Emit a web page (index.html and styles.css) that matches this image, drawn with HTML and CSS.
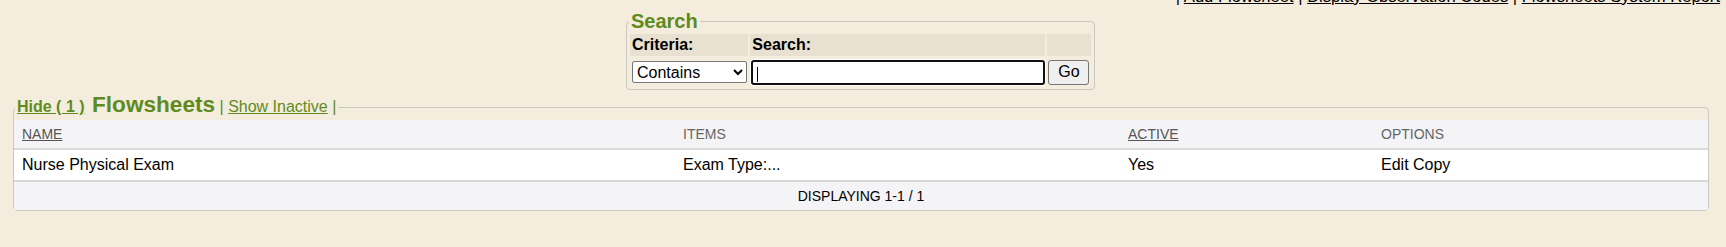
FILE: index.html
```html
<!DOCTYPE html>
<html lang="en">
<head>
    <meta charset="UTF-8">
    <title>Flowsheets</title>
    <link rel="stylesheet" href="styles.css">
</head>
<body>
    <div class="toplinks">
        | <a href="#">Add Flowsheet</a> | <a href="#">Display Observation Codes</a> | <a href="#">Flowsheets System Report</a>
    </div>

    <fieldset class="search">
        <legend>Search</legend>
        <table class="search-table">
            <tr>
                <th class="c1">Criteria:</th>
                <th class="c2">Search:</th>
                <th class="c3"></th>
            </tr>
            <tr>
                <td class="c1">
                    <select class="criteria">
                        <option>Contains</option>
                        <option>Starts With</option>
                        <option>Equals</option>
                    </select>
                </td>
                <td class="c2"><input type="text" class="query"></td>
                <td class="c3"><button class="go">Go</button></td>
            </tr>
        </table>
    </fieldset>

    <fieldset class="list">
        <legend>
            <a href="#" class="hide">Hide ( 1 )</a>
            <span class="title">Flowsheets</span>
            <span class="sep">|</span> <a href="#" class="inactive">Show Inactive</a> <span class="sep">|</span>
        </legend>
        <table class="grid">
            <thead>
                <tr>
                    <th class="col-name"><a href="#">NAME</a></th>
                    <th class="col-items">ITEMS</th>
                    <th class="col-active"><a href="#">ACTIVE</a></th>
                    <th class="col-options">OPTIONS</th>
                </tr>
            </thead>
            <tbody>
                <tr>
                    <td>Nurse Physical Exam</td>
                    <td>Exam Type:...</td>
                    <td>Yes</td>
                    <td>Edit Copy</td>
                </tr>
            </tbody>
            <tfoot>
                <tr>
                    <td colspan="4">DISPLAYING 1-1 / 1</td>
                </tr>
            </tfoot>
        </table>
    </fieldset>
</body>
</html>
```

FILE: styles.css
```css
body {
    margin: 0;
    padding: 0 5px 0 0;
    background-color: #f4ecdd;
    font-family: "Liberation Sans", Arial, sans-serif;
    color: #000;
}
.toplinks {
    margin-top: -12px;
    height: 18px;
    line-height: 18px;
    font-size: 16.6px;
    text-align: right;
    padding-right: 1px;
    white-space: nowrap;
}
.toplinks a {
    color: #000;
}

/* search box */
.search {
    width: 465px;
    margin: 4px auto 0;
    padding: 0 1px 1px;
    border: 1px solid #cbc8c0;
    border-radius: 4px;
}
.search legend {
    color: #5f8b1d;
    font-size: 20px;
    font-weight: bold;
    line-height: 22px;
    padding: 0 2px;
    margin-left: 1px;
}
.search-table {
    border-spacing: 2px;
    width: 100%;
}
.search-table th {
    background-color: #e8e1d1;
    text-align: left;
    font-size: 16px;
    height: 22px;
    padding: 0 2px;
}
.search-table td {
    height: 28px;
    padding: 0;
}
.search-table .c1 { width: 118px; }
.search-table .c3 { width: 44px; }
.search-table td.c1 { padding-left: 2px; }
.search-table td.c2 { padding-left: 1px; }
.search-table td.c3 { padding-left: 1px; }
.criteria {
    width: 115px;
    height: 22px;
    font-family: "Liberation Sans", Arial, sans-serif;
    font-size: 16px;
    border: 1px solid #767676;
    border-radius: 2px;
    background-color: #fff;
    color: #000;
}
.query {
    box-sizing: border-box;
    width: 294px;
    height: 25px;
    margin: 0;
    border: 2px solid #101010;
    border-radius: 3px;
    box-shadow: 0 0 0 1px #fff;
    outline: none;
    background: #fff linear-gradient(#000, #000) no-repeat 4px 5px / 1px 15px;
}
.go {
    box-sizing: border-box;
    width: 41px;
    height: 25px;
    font-family: "Liberation Sans", Arial, sans-serif;
    font-size: 16px;
    background-color: #efefef;
    border: 1px solid #767676;
    border-radius: 3px;
    padding: 0;
    color: #000;
}

/* flowsheet list */
.list {
    margin: 4px 12px 0 13px;
    padding: 0;
    border: 1px solid #cbc8c0;
    border-radius: 4px;
}
.list legend {
    padding: 0 2px;
    margin-left: 1px;
    line-height: 26px;
    height: 26px;
    color: #5f8b1d;
}
.list legend a {
    color: #5f8b1d;
}
.list legend a,
.list legend span {
    line-height: 1;
}
.hide {
    font-size: 16px;
    font-weight: bold;
}
.title {
    font-size: 22.6px;
    font-weight: bold;
    margin-left: 3px;
}
.sep, .inactive {
    font-size: 16px;
}
.grid {
    width: 100%;
    border-collapse: collapse;
}
.grid th {
    background-color: #f4f4f6;
    color: #666;
    font-size: 14px;
    font-weight: normal;
    text-align: left;
    height: 28px;
    padding: 0 8px;
    border-bottom: 2px solid #d9d9d9;
}
.grid th a {
    color: #555;
}
.grid .col-name { width: 645px; }
.grid .col-items { width: 429px; }
.grid .col-active { width: 237px; }
.grid tbody td {
    background-color: #fff;
    font-size: 16px;
    height: 30px;
    padding: 0 8px;
    border-bottom: 2px solid #d9d9d9;
}
.grid tfoot td {
    background-color: #f4f4f6;
    font-size: 14px;
    text-align: center;
    height: 28px;
    padding: 0;
}
```
